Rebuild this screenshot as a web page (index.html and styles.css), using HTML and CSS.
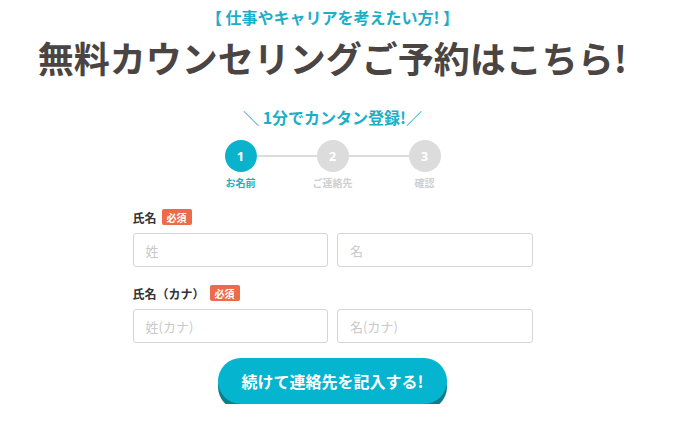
FILE: index.html
```html
<!DOCTYPE html>
<html lang="ja">
<head>
<meta charset="utf-8">
<title>無料カウンセリングご予約</title>
<link rel="stylesheet" href="styles.css">
</head>
<body>
<div class="page">
  <p class="lead">【 仕事やキャリアを考えたい方! 】</p>
  <h1 class="title">無料カウンセリングご予約はこちら!</h1>
  <p class="catch">＼ 1分でカンタン登録!／</p>

  <div class="steps">
    <div class="step-row">
      <span class="dot active">1</span>
      <span class="line"></span>
      <span class="dot">2</span>
      <span class="line"></span>
      <span class="dot">3</span>
    </div>
    <div class="label-row">
      <span class="step-label active">お名前</span>
      <span class="step-label">ご連絡先</span>
      <span class="step-label">確認</span>
    </div>
  </div>

  <form class="form">
    <div class="field-label">氏名<span class="badge">必須</span></div>
    <div class="inputs">
      <input class="input" type="text" placeholder="姓">
      <input class="input" type="text" placeholder="名">
    </div>
    <div class="field-label second">氏名（カナ）<span class="badge">必須</span></div>
    <div class="inputs">
      <input class="input" type="text" placeholder="姓(カナ)">
      <input class="input" type="text" placeholder="名(カナ)">
    </div>
    <button class="submit" type="button">続けて連絡先を記入する!</button>
  </form>
</div>
</body>
</html>
```

FILE: styles.css
```css
* { box-sizing: border-box; }
html, body { margin: 0; padding: 0; background: #fff; }
body {
  font-family: "Noto Sans CJK JP", "Noto Sans", sans-serif;
  color: #333;
}
.page {
  width: 665px;
  display: flex;
  flex-direction: column;
  align-items: center;
}
.lead {
  margin: 7px 0 0;
  font-size: 16px;
  line-height: 20px;
  font-weight: 700;
  color: #1aaec8;
}
.title {
  margin: 8px 0 0;
  font-size: 36px;
  line-height: 44px;
  font-weight: 700;
  color: #4a4442;
  letter-spacing: 0;
}
.catch {
  margin: 27px 0 0;
  font-size: 16px;
  line-height: 22px;
  font-weight: 700;
  color: #1aaec8;
}
.steps {
  margin-top: 12px;
  display: flex;
  flex-direction: column;
  align-items: center;
}
.step-row {
  display: flex;
  align-items: center;
}
.dot {
  width: 32px;
  height: 32px;
  border-radius: 50%;
  background: #dcdcdc;
  color: #fff;
  font-size: 13px;
  font-weight: 700;
  display: flex;
  align-items: center;
  justify-content: center;
  font-family: "Noto Sans", sans-serif;
}
.dot.active { background: #0bb2cc; }
.line {
  width: 60px;
  height: 2px;
  background: #dcdcdc;
}
.label-row {
  margin-top: 4px;
  display: flex;
}
.step-label {
  width: 92px;
  text-align: center;
  font-size: 10px;
  line-height: 14px;
  font-weight: 700;
  color: #cfcfcf;
}
.step-label.active { color: #1aaec8; }

.form {
  width: 400px;
  margin: 19px 0 0;
  display: flex;
  flex-direction: column;
}
.field-label {
  display: flex;
  align-items: center;
  height: 16px;
  font-size: 12px;
  font-weight: 700;
  color: #333;
}
.field-label.second { margin-top: 18px; }
.badge {
  margin-left: 5px;
  width: 30px;
  height: 16px;
  border-radius: 2px;
  background: #ec6b4b;
  color: #fff;
  font-size: 10px;
  font-weight: 700;
  display: flex;
  align-items: center;
  justify-content: center;
}
.inputs {
  margin-top: 8px;
  display: flex;
  gap: 9px;
}
.input {
  flex: 1;
  min-width: 0;
  height: 34px;
  border: 1px solid #d6d6d6;
  border-radius: 3px;
  padding: 0 12px;
  font-family: inherit;
  font-size: 13px;
  color: #333;
  background: #fff;
  outline: none;
}
.input::placeholder { color: #c9c9c9; }
.submit {
  align-self: center;
  margin-top: 15px;
  width: 229px;
  height: 46px;
  border: none;
  border-radius: 23px;
  background: #05b4cf;
  box-shadow: 0 6px 0 #0a7e8c;
  color: #fff;
  font-family: inherit;
  font-size: 16px;
  font-weight: 700;
  cursor: pointer;
}
```
